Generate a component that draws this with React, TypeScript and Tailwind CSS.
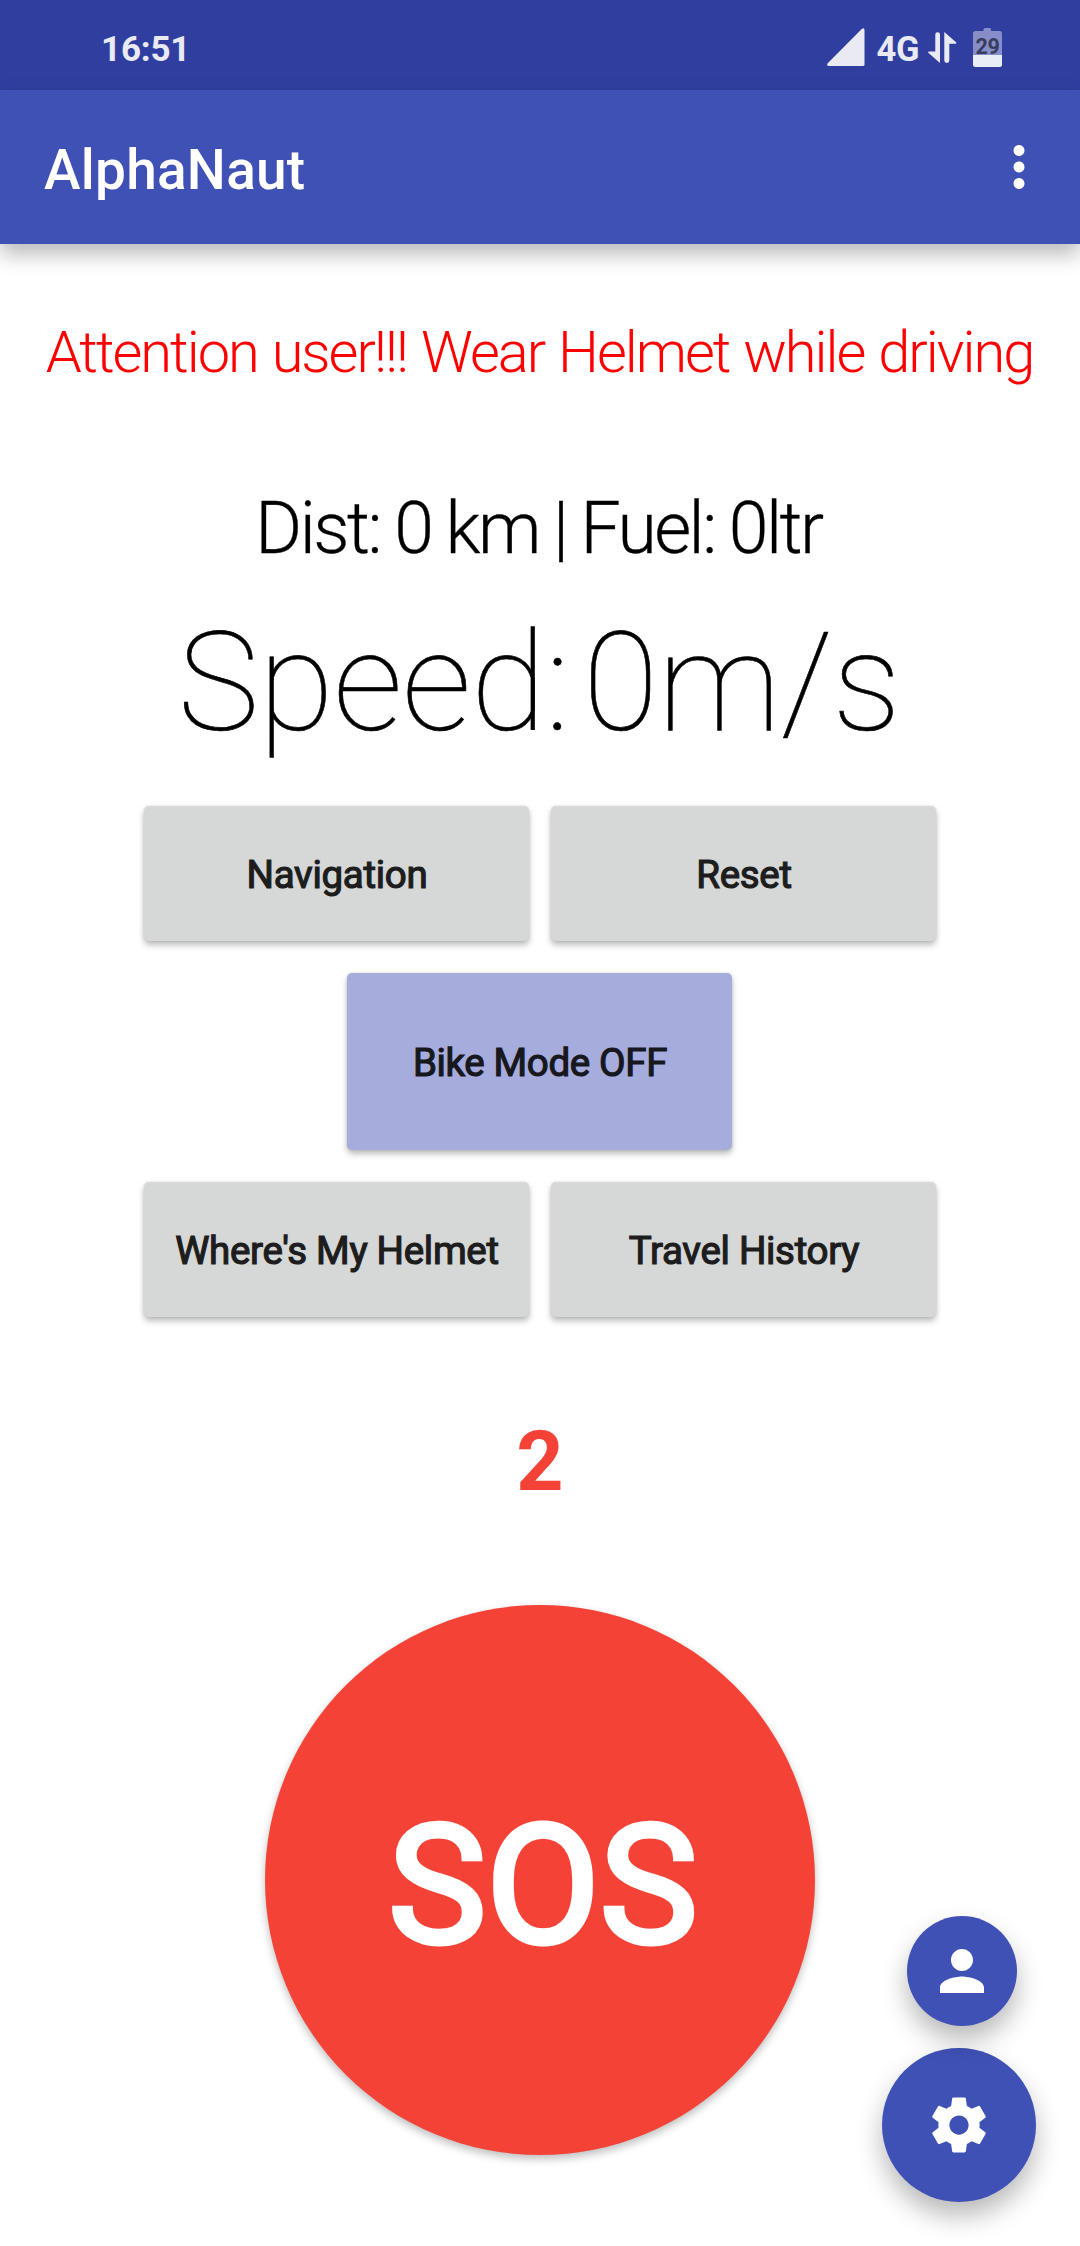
import React from "react";
import { MdMoreVert, MdPerson } from "react-icons/md";

function SignalIcon() {
  return (
    <svg width="38" height="38" viewBox="0 0 38 38" fill="#eaeaf5">
      <path d="M35 .8Q37.3-.6 37.5 2V36.5Q37.5 38 36 38H2Q-.8 37.600.7 35.200Z" />
    </svg>
  );
}

function DataArrowsIcon() {
  return (
    <svg width="29" height="31" viewBox="0 0 29 31" fill="#eaeaf5">
      <path d="M7.300 2.500a2.350 2.350 0 0 1 4.700 0V31L.3 20.700Q-.3 19.500 1 19.500H7.300Z" />
      <path d="M16.300 0L28.300 10.500Q28.700 11.700 27.400 11.700H21.300V28.500a2.500 2.500 0 0 1-5 0Z" />
    </svg>
  );
}

function BatteryIcon() {
  return (
    <div className="relative h-[39px] w-[29px]">
      <svg width="29" height="39" viewBox="0 0 29 39" className="block">
        <path d="M10.500 3V1.500Q10.500 0 12 0H16.500Q18 0 18 1.500V3H26.500Q29 3 29 5.500V27H0V5.500Q0 3 2.500 3Z" fill="#878ec7" />
        <path d="M0 27H29V36.500Q29 39 26.500 39H2.500Q0 39 0 36.500Z" fill="#e9edf6" />
      </svg>
      <span className="absolute inset-x-0 top-[5px] text-center text-[21.5px] leading-[28px] font-bold tracking-[-0.3px] text-[#383d5e]">
        29
      </span>
    </div>
  );
}

function StatusBar() {
  return (
    <div className="flex h-[90px] items-center justify-between bg-[#303f9f] pr-[78px] pl-[101px] text-[#eaeaf5]">
      <span className="pt-[9px] text-[35px] leading-[40px] font-bold tracking-[-0.2px]">16:51</span>
      <div className="flex items-center pt-[3px]">
        <SignalIcon />
        <span className="ml-[11px] pt-[5px] text-[34.5px] leading-[40px] font-bold tracking-[-0.4px]">4G</span>
        <div className="ml-[9px] pt-[2px]">
          <DataArrowsIcon />
        </div>
        <div className="ml-[16px] pt-[2px]">
          <BatteryIcon />
        </div>
      </div>
    </div>
  );
}

function Toolbar() {
  return (
    <header className="flex h-[154px] items-center justify-between bg-[#3f51b5] pr-[28px] pl-[44px] text-white shadow-[0_10px_20px_rgba(0,0,0,0.28)]">
      <h1 className="pt-[6px] text-[55px] leading-[64px] font-medium tracking-[0.25px]">AlphaNaut</h1>
      <MdMoreVert size={66} />
    </header>
  );
}

function ActionButton({ label }: { label: string }) {
  return (
    <button className="flex h-[135px] w-[385px] items-center justify-center rounded-[5px] bg-[#d6d8d7] pt-[3px] pl-px text-[38.5px] leading-[48px] tracking-[-0.3px] text-[#1d1d1d] shadow-[0_4px_6px_rgba(0,0,0,0.26),0_0_3px_rgba(0,0,0,0.12)] [-webkit-text-stroke:1.2px_#1d1d1d]">
      {label}
    </button>
  );
}

export default function App() {
  return (
    <div className="relative flex h-[2246px] w-[1080px] flex-col overflow-hidden bg-white font-[Roboto,sans-serif]">
      <StatusBar />
      <Toolbar />
      <main className="flex flex-col items-center whitespace-nowrap text-black">
        <p className="mt-[72px] mr-px text-[57.75px] leading-[72px] font-light tracking-[-2px] text-[#ff0000] [word-spacing:1.8px]">
          Attention user!!! Wear Helmet while driving
        </p>
        <p className="mt-[97px] mr-[3px] text-[71.5px] leading-[88px] font-light tracking-[-2.5px] [word-spacing:-0.8px] [-webkit-text-stroke:0.3px_black]">
          Dist: 0 km | Fuel: 0ltr
        </p>
        <p className="mt-[30px] mr-[2px] text-[137.5px] leading-[160px] font-thin tracking-[-0.5px] [word-spacing:-19px] [-webkit-text-stroke:0.6px_black]">
          Speed: 0m/s
        </p>
        <div className="mt-[43px] flex gap-[22px]">
          <ActionButton label="Navigation" />
          <ActionButton label="Reset" />
        </div>
        <button className="mt-[32px] mr-px flex h-[177px] w-[385px] items-center justify-center rounded-[5px] bg-[#a6addd] pt-[3px] pl-px text-[38.5px] leading-[48px] tracking-[-0.35px] text-[#17181d] shadow-[0_4px_6px_rgba(0,0,0,0.26),0_0_3px_rgba(0,0,0,0.12)] [-webkit-text-stroke:1.2px_#17181d]">
          Bike Mode OFF
        </button>
        <div className="mt-[32px] flex gap-[22px]">
          <ActionButton label="Where's My Helmet" />
          <ActionButton label="Travel History" />
        </div>
        <p className="mt-[97px] text-[82.5px] leading-[96px] font-bold text-[#f44336]">2</p>
        <button className="mt-[95px] flex size-[550px] items-center justify-center rounded-full bg-[#f44336] pt-[12px] pl-[6px] text-[165px] leading-[192px] text-white shadow-[0_4px_8px_rgba(0,0,0,0.26)] [-webkit-text-stroke:5.2px_white]">
          SOS
        </button>
      </main>
      <div className="absolute right-[44px] bottom-[44px] flex flex-col items-end gap-[22px] text-white">
        <button className="relative z-10 mr-[19px] flex size-[110px] items-center justify-center rounded-full bg-[#3f51b5] shadow-[0_14px_26px_rgba(0,0,0,0.28)]">
          <MdPerson size={66} />
        </button>
        <button className="flex size-[154px] items-center justify-center rounded-full bg-[#3f51b5] shadow-[0_14px_26px_rgba(0,0,0,0.28)]">
          <svg width="66" height="66" viewBox="0 0 24 24" fill="currentColor">
            <path d="M19.430 12.980c.04-.32.07-.64.07-.98s-.03-.66-.07-.98l2.110-1.650c.19-.15.24-.42.12-.64l-2-3.460c-.12-.22-.39-.3-.61-.22l-2.490 1c-.52-.4-1.080-.73-1.690-.98l-.38-2.650C14.460 2.180 14.250 2 14 2h-4c-.25 0-.46.18-.49.42l-.38 2.650c-.61.25-1.170.59-1.690.98l-2.490-1c-.23-.09-.49 0-.61.22l-2 3.460c-.13.22-.07.49.12.64l2.110 1.650c-.04.32-.07.65-.07.98s.03.66.07.98l-2.110 1.650c-.19.15-.24.42-.12.64l2 3.460c.12.22.39.3.61.22l2.490-1c.52.4 1.080.73 1.690.98l.38 2.650c.03.24.24.42.49.42h4c.25 0 .46-.18.49-.42l.38-2.650c.61-.25 1.170-.59 1.690-.98l2.490 1c.23.09.49 0 .61-.22l2-3.460c.12-.22.07-.49-.12-.64l-2.110-1.650zM12 15.500c-1.930 0-3.500-1.570-3.500-3.500s1.570-3.500 3.500-3.500 3.500 1.570 3.500 3.500-1.570 3.500-3.500 3.500z" />
          </svg>
        </button>
      </div>
    </div>
  );
}
